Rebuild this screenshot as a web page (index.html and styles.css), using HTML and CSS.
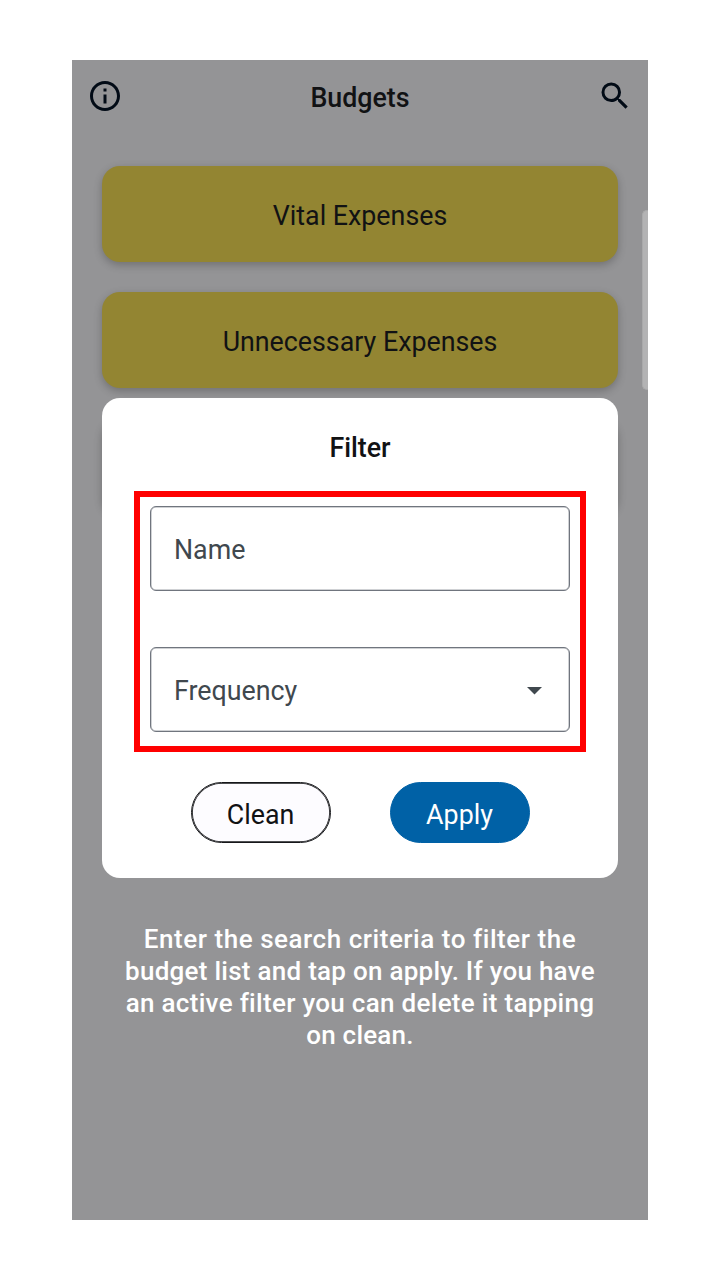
FILE: index.html
```html
<!DOCTYPE html>
<html lang="en">
<head>
<meta charset="utf-8">
<title>Budgets</title>
<link rel="stylesheet" href="styles.css">
</head>
<body>
<main class="phone">
  <header class="topbar">
    <svg class="icon" viewBox="0 0 24 24"><path d="M11 7h2v2h-2zm0 4h2v6h-2zm1-9C6.480 2 2 6.480 2 12s4.480 10 10 10 10-4.480 10-10S17.520 2 12 2zm0 18c-4.410 0-8-3.590-8-8s3.590-8 8-8 8 3.590 8 8-3.590 8-8 8z"/></svg>
    <h1 class="title">Budgets</h1>
    <svg class="icon" viewBox="0 0 24 24"><path d="M15.500 14h-.79l-.28-.27A6.471 6.471 0 0 0 16 9.500 6.500 6.500 0 1 0 9.500 16c1.610 0 3.090-.59 4.230-1.570l.27.28v.79l5 4.990L20.490 19l-4.990-5zm-6 0C7.010 14 5 11.990 5 9.500S7.010 5 9.500 5 14 7.010 14 9.500 11.990 14 9.500 14z"/></svg>
  </header>
  <section class="budgets">
    <div class="budget">Vital Expenses</div>
    <div class="budget">Unnecessary Expenses</div>
    <div class="budget"></div>
  </section>
  <div class="scrollbar"></div>
  <div class="overlay">
    <section class="dialog">
      <h2 class="dialog-title">Filter</h2>
      <div class="highlight">
        <div class="field">Name</div>
        <div class="field">Frequency
          <svg class="caret" viewBox="0 0 15 8"><path d="M0 0h15L7.500 7.500z"/></svg>
        </div>
      </div>
      <div class="actions">
        <button class="button clean">Clean</button>
        <button class="button apply">Apply</button>
      </div>
    </section>
    <p class="caption">
      <span class="line first">Enter the search criteria to filter the</span>
      <span class="line second">budget list and tap on apply. If you have</span>
      <span class="line third">an active filter you can delete it tapping</span>
      <span class="line fourth">on clean.</span>
    </p>
  </div>
</main>
</body>
</html>
```
FILE: styles.css
```css
* { box-sizing: border-box; }
body {
  margin: 0;
  padding: 60px 72px;
  background: #fff;
  font-family: Roboto, sans-serif;
  font-size: 26.800px;
  color: #111214;
}
.phone {
  position: relative;
  height: 1160px;
  overflow: hidden;
  background: #949496;
}
.topbar {
  display: flex;
  justify-content: space-between;
  align-items: flex-start;
  height: 106px;
  padding: 18px 15px;
}
.icon { width: 36px; height: 36px; fill: #020b16; }
.title {
  margin: 2px 0 0;
  font-size: 26.800px;
  line-height: 36px;
  font-weight: 500;
}
.budgets {
  display: flex;
  flex-direction: column;
  gap: 30px;
  padding: 0 30px;
}
.budget {
  height: 96px;
  border-radius: 18px;
  background: #938532;
  box-shadow: 0 3px 8px rgba(0, 0, 0, .24);
  line-height: 100px;
  text-align: center;
}
.scrollbar {
  position: absolute;
  top: 150px;
  right: 0;
  width: 6px;
  height: 180px;
  border: 1px solid #a9a9aa;
  border-right: 0;
  border-radius: 5px 0 0 5px;
  background: #b3b3b4;
}
.overlay {
  position: absolute;
  inset: 0;
  padding: 338px 30px 0;
}
.dialog {
  height: 480.400px;
  padding: 32px 32px 0;
  border-radius: 18px;
  background: #fff;
}
.dialog-title {
  margin: 0;
  font-size: 26.800px;
  line-height: 36px;
  font-weight: 500;
  text-align: center;
}
.highlight {
  display: flex;
  flex-direction: column;
  gap: 57px;
  height: 261px;
  margin-top: 25px;
  padding: 9px 10px;
  border: 6px solid #f00;
}
.field {
  display: flex;
  justify-content: space-between;
  align-items: center;
  height: 84.500px;
  padding: 3px 27px 0 23px;
  border: 1.500px solid #70757e;
  border-radius: 6px;
  box-shadow: inset 0 0 0 .5px #a0a4aa;
  color: #40484e;
}
.field + .field { margin-top: -.500px; }
.caret { width: 15px; height: 8px; fill: #40484e; }
.actions {
  display: flex;
  justify-content: center;
  gap: 59px;
  margin-top: 30px;
}
.button {
  width: 140px;
  height: 61px;
  padding: 4px 0 0;
  border: 1.500px solid #16171a;
  border-radius: 31px;
  background: #fdfcff;
  font: 26.800px Roboto, sans-serif;
  color: #111214;
}
.clean { box-shadow: inset 0 0 0 .8px #16171a; }
.apply { border-color: #0061a6; background: #0061a6; color: #fff; }
.caption {
  margin: 45px 0 0;
  font-size: 26px;
  font-weight: 500;
  line-height: 32px;
  text-align: center;
  white-space: nowrap;
  color: #fff;
}
.line { display: block; }
.first { letter-spacing: .54px; }
.second { letter-spacing: .26px; }
.third { letter-spacing: .3px; }
.fourth { letter-spacing: .2px; }
```
